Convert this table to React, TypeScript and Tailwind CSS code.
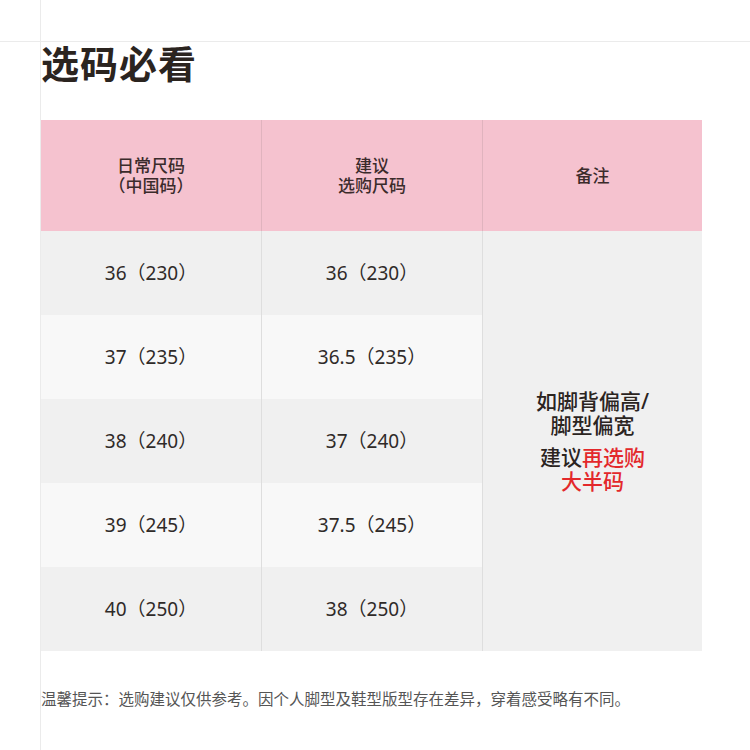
const rows = [
  ["36（230）", "36（230）"],
  ["37（235）", "36.5（235）"],
  ["38（240）", "37（240）"],
  ["39（245）", "37.5（245）"],
  ["40（250）", "38（250）"],
];

const font = "font-['Noto_Sans','Noto_Sans_CJK_SC',sans-serif]";

export default function App() {
  return (
    <div className={`w-[750px] h-[750px] flex flex-col bg-white ${font}`}>
      <div className="h-[42px] border-b border-[#ebebeb] flex shrink-0">
        <div className="ml-[40px] border-l border-[#ebebeb]" />
      </div>
      <div className="ml-[40px] border-l border-[#ebebeb] flex-1 flex flex-col">
        <h1 className="text-[38px] leading-[40px] font-semibold text-[#2b241f] mt-[1px] tracking-[1px]">选码必看</h1>
        <div className="mt-[37px] w-[661px] grid grid-cols-[221px_221px_219px] grid-rows-[111px_repeat(5,84px)]">
          <div className="bg-[#f5c2cf] border-r border-[#e0b3be] flex items-center justify-center text-center text-[17px] leading-[20px] font-medium text-[#3b2b2b]">
            <div>日常尺码<br />（中国码）</div>
          </div>
          <div className="bg-[#f5c2cf] border-r border-[#e0b3be] flex items-center justify-center text-center text-[17px] leading-[20px] font-medium text-[#3b2b2b]">
            <div>建议<br />选购尺码</div>
          </div>
          <div className="bg-[#f5c2cf] flex items-center justify-center text-[17px] font-medium text-[#3b2b2b]">备注</div>
          {rows.map((r, i) => (
            <div key={i} className="contents">
              <div
                className={`${i % 2 === 0 ? "bg-[#f0f0f0]" : "bg-[#f8f8f8]"} border-r border-[#dedede] flex items-center justify-center text-[19px] text-[#2f2a28]`}
                style={{ gridColumn: 1, gridRow: i + 2 }}
              >
                {r[0]}
              </div>
              <div
                className={`${i % 2 === 0 ? "bg-[#f0f0f0]" : "bg-[#f8f8f8]"} border-r border-[#dedede] flex items-center justify-center text-[19px] text-[#2f2a28]`}
                style={{ gridColumn: 2, gridRow: i + 2 }}
              >
                {r[1]}
              </div>
            </div>
          ))}
          <div className="col-start-3 row-start-2 row-span-5 bg-[#f0f0f0] flex flex-col items-center justify-center text-center text-[21px] leading-[24px] font-medium text-[#2b241f]">
            <div>如脚背偏高/<br />脚型偏宽</div>
            <div className="mt-[8px]">
              建议<span className="text-[#e3282b]">再选购</span>
              <br />
              <span className="text-[#e3282b]">大半码</span>
            </div>
          </div>
        </div>
        <p className="mt-[38px] text-[15.5px] leading-[20px] text-[#555]">
          温馨提示：选购建议仅供参考。因个人脚型及鞋型版型存在差异，穿着感受略有不同。
        </p>
      </div>
    </div>
  );
}
